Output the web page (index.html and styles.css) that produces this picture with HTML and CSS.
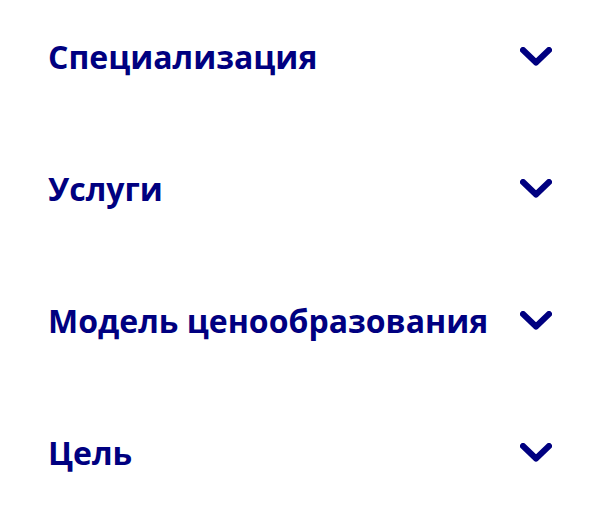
FILE: index.html
```html
<!DOCTYPE html>
<html lang="ru">

<head>
  <meta charset="UTF-8">
  <meta name="viewport" content="width=device-width, initial-scale=1.0">
  <title>Фильтры</title>
  <link rel="stylesheet" href="styles.css">
</head>

<body>
  <div class="filters">
    <div class="filter-item">
      <span class="filter-title">Специализация</span>
      <svg class="chevron" width="32" height="20" viewBox="0 0 32 20"><path d="M3 3 L16 15.5 L29 3"/></svg>
    </div>
    <div class="filter-item">
      <span class="filter-title">Услуги</span>
      <svg class="chevron" width="32" height="20" viewBox="0 0 32 20"><path d="M3 3 L16 15.5 L29 3"/></svg>
    </div>
    <div class="filter-item">
      <span class="filter-title">Модель ценообразования</span>
      <svg class="chevron" width="32" height="20" viewBox="0 0 32 20"><path d="M3 3 L16 15.5 L29 3"/></svg>
    </div>
    <div class="filter-item">
      <span class="filter-title">Цель</span>
      <svg class="chevron" width="32" height="20" viewBox="0 0 32 20"><path d="M3 3 L16 15.5 L29 3"/></svg>
    </div>
  </div>
</body>

</html>
```

FILE: styles.css
```css
body {
  margin: 0;
  background: #fff;
  font-family: "Open Sans", "Noto Sans", sans-serif;
}

.filters {
  display: flex;
  flex-direction: column;
  gap: 92px;
  /* отступы списка фильтров */
  padding: 37px 48px 0 48px;
}

.filter-item {
  display: flex;
  align-items: center;
  justify-content: space-between;
  gap: 30px;
  height: 40px;
}

.filter-title {
  font-size: 32px;
  line-height: 40px;
  font-weight: 700;
  color: #000080;
}

.chevron {
  flex-shrink: 0;
}

.chevron path {
  fill: none;
  stroke: #000080;
  stroke-width: 6;
  stroke-linecap: round;
  stroke-linejoin: round;
}
```
